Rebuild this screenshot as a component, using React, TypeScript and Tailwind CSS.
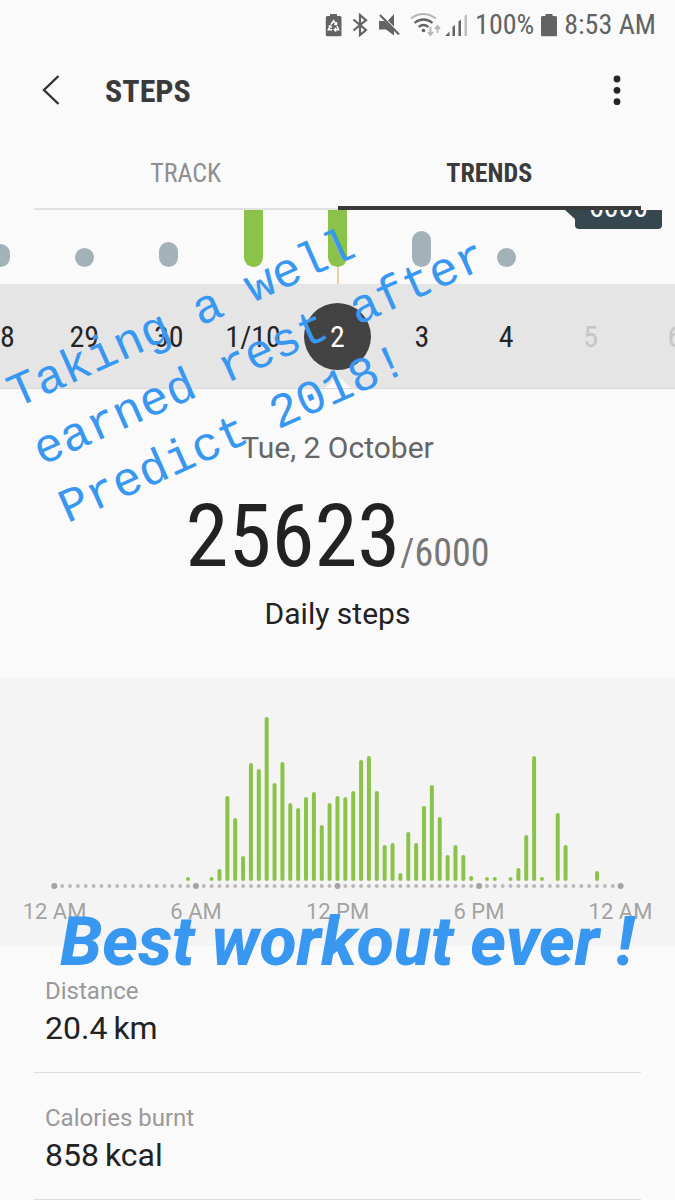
import React from "react";

const condensed = "font-['Roboto_Condensed','Roboto','Liberation_Sans_Narrow',sans-serif]";

type Day = { label: string; bar: number; goal?: boolean; selected?: boolean; future?: boolean };

const days: Day[] = [
  { label: "28", bar: 23 },
  { label: "29", bar: 19 },
  { label: "30", bar: 25 },
  { label: "1/10", bar: 90, goal: true },
  { label: "2", bar: 90, goal: true, selected: true },
  { label: "3", bar: 36 },
  { label: "4", bar: 19 },
  { label: "5", bar: 0, future: true },
  { label: "6", bar: 0, future: true },
];

// Twenty-minute slots of the day: [slot, bar height]
const activity: [number, number][] = [
  [17, 4], [20, 4], [21, 12], [22, 85], [23, 63], [24, 25], [25, 118], [26, 112], [27, 164],
  [28, 98], [29, 119], [30, 78], [31, 73], [32, 84], [33, 89], [34, 56], [35, 78], [36, 85],
  [37, 84], [38, 90], [39, 121], [40, 125], [41, 90], [42, 36], [43, 38], [44, 8], [45, 49],
  [46, 38], [47, 75], [48, 96], [49, 64], [50, 26], [51, 36], [52, 26], [53, 5], [55, 4],
  [56, 4], [58, 4], [59, 13], [60, 46], [61, 125], [62, 4], [64, 68], [65, 36], [69, 10],
];

const slotX = (slot: number) => 54.3 + slot * 7.866;

const stats = [
  { label: "Distance", amount: "20.4", unit: "km" },
  { label: "Calories burnt", amount: "858", unit: "kcal" },
];

function StatusBar() {
  return (
    <div className={`flex h-12 items-center justify-end pt-[2px] pr-[19px] text-[28px] leading-none text-[#636363] ${condensed}`}>
      <svg className="mr-[10px] h-[24px] w-[17px]" viewBox="0 0 17 24" aria-hidden="true">
        <path fill="#636363" d="M5 1h7v2h3q1.500 0 1.500 1.500V22q0 1.200-1.200 1.200H2Q.8 23.200.8 22V4.500Q.8 3 2.300 3H5z" />
        <g stroke="#fafafa" strokeWidth="1.600" fill="none">
          <path d="M6 11.500 8.600 7.600l2.300 3.600M12 13l1.600 3.800H9.800M7.300 16.800H3.400l1.900-3.900" />
          <path d="M9.200 11.500h2.300V9M11.200 15l-1.800 1.800 1.800 1.700M3.600 13.600l1.900-.8 1 2" />
        </g>
      </svg>
      <svg className="mr-[10px] h-[24px] w-[16px]" viewBox="0 0 16 24" aria-hidden="true">
        <path d="M1.500 6.500 14 17l-6 5V2l6 5.200L1.500 17.500" fill="none" stroke="#636363" strokeWidth="2.200" />
      </svg>
      <svg className="mr-[10px] h-[24px] w-[22px]" viewBox="0 0 22 24" aria-hidden="true">
        <path fill="#636363" d="M1 8h5.500L16 17.500V22.500l-8-6H1zM16 1v12.500l-6-6z" />
        <path d="M2 2 21 21.500" stroke="#636363" strokeWidth="2.200" />
      </svg>
      <svg className="mr-[4px] h-[24px] w-[31px]" viewBox="0 0 31 24" fill="none" aria-hidden="true">
        <path d="M1 5.500q12-9 25 0" stroke="#b5b5b5" strokeWidth="2" />
        <path d="M4.500 10q9-7 18 0M8.500 14q5-4 10 0" stroke="#636363" strokeWidth="2.200" />
        <circle cx="13.500" cy="17.500" r="1.800" fill="#636363" />
        <path d="M20.500 14v8m-2.500-3 2.500 3 2.500-3M27.500 20v-7m-2.500 3 2.500-3 2.500 3" stroke="#b5b5b5" strokeWidth="1.800" />
      </svg>
      <svg className="mr-[8px] h-[24px] w-[22px]" viewBox="0 0 22 24" aria-hidden="true">
        <path fill="#636363" d="M0 23 4.500 18.500V23zM7.500 14l2.500-2v11H7.500zM13.500 8.500l2.500-2V23h-2.500z" />
        <path fill="#bdbdbd" d="M19.500 3 22 1v22h-2.500z" />
      </svg>
      <span>100%</span>
      <svg className="mx-[7px] h-[24px] w-[16px]" viewBox="0 0 16 24" aria-hidden="true">
        <path fill="#636363" d="M4.500 1h7v2h3Q16 3 16 4.500V22q0 1.200-1.200 1.200H1.200Q0 23.200 0 22V4.500Q0 3 1.500 3h3z" />
      </svg>
      <span>8:53 AM</span>
    </div>
  );
}

export default function App() {
  return (
    <main className="relative min-h-screen w-full overflow-hidden bg-[#fafafa] font-['Roboto',sans-serif] text-[#222]">
      <StatusBar />

      <header className={`flex h-[86px] items-center pr-[46px] pl-[40px] ${condensed}`}>
        <button type="button" aria-label="Back" className="w-[65px]">
          <svg className="h-[32px] w-[22px]" viewBox="0 0 22 32" fill="none" aria-hidden="true">
            <path d="M18.500 1 4 15l14.500 14" stroke="#333" strokeWidth="2.400" />
          </svg>
        </button>
        <h1 className="flex-1 text-[32px] font-bold text-[#3a3a3a]">STEPS</h1>
        <button type="button" aria-label="More options" className="w-6">
          <svg className="h-[32px] w-6" viewBox="0 0 24 32" fill="#252525" aria-hidden="true">
            <circle cx="12" cy="4" r="3.400" />
            <circle cx="12" cy="15.300" r="3.400" />
            <circle cx="12" cy="26.700" r="3.400" />
          </svg>
        </button>
      </header>

      <nav className={`mx-[34px] flex h-[76px] text-[26px] leading-none ${condensed}`}>
        <button type="button" className="flex-1 border-b-2 border-[#e2e2e2] pt-1 text-[#8f8f8f]">TRACK</button>
        <button type="button" className="flex-1 border-b-4 border-[#3a3a3a] pt-[6px] font-bold text-[#3a3a3a]">TRENDS</button>
      </nav>

      <section aria-label="Days" className={condensed}>
        <div className="relative h-[74px] overflow-hidden">
          <div className="-ml-[6.25%] flex h-full w-[112.5%]">
            {days.map((d) => (
              <div key={d.label} className="relative flex flex-1 items-end justify-center pb-[17px]">
                <div
                  className={`w-[19px] shrink-0 rounded-full ${d.goal ? "bg-[#8bc34a]" : "bg-[#a3b1b8]"}`}
                  style={{ height: d.bar }}
                />
                {d.selected && <div className="absolute bottom-0 left-1/2 h-[17px] w-px -translate-x-1/2 bg-[#e0a43c]" />}
              </div>
            ))}
          </div>
          <div className="absolute -top-[25px] right-[13px] flex h-[44px] w-[87px] items-center justify-center rounded bg-[#37474f] text-[30px] leading-none text-white">
            6000
          </div>
          <svg className="absolute top-0 right-[99px] h-[10px] w-[11px]" viewBox="0 0 11 10" aria-hidden="true">
            <path d="M0 0h11v10z" fill="#37474f" />
          </svg>
        </div>

        <div className="relative h-[105px] overflow-hidden border-b border-[#d9d9d9] bg-[#e5e5e5]">
          <svg className="absolute bottom-0 left-1/2 h-[12px] w-[26px] -translate-x-1/2" viewBox="0 0 26 12" aria-hidden="true">
            <path d="M0 12 13 0l13 12z" fill="#fafafa" />
          </svg>
          <div className="-ml-[6.25%] flex h-full w-[112.5%] items-center">
            {days.map((d) => (
              <div key={d.label} className="flex flex-1 justify-center">
                <button
                  type="button"
                  className={`flex h-[67px] min-w-[67px] items-center justify-center rounded-full pt-[2px] text-[30px] leading-none ${
                    d.selected ? "bg-[#424242] text-white" : d.future ? "text-[#c6c6c6]" : "text-[#252525]"
                  }`}
                >
                  {d.label}
                </button>
              </div>
            ))}
          </div>
        </div>
      </section>

      <section className="flex h-[289px] flex-col items-center pt-[39px]">
        <p className="text-[30px] leading-[40px] text-[#666]">Tue, 2 October</p>
        <p className={`mt-[26px] flex items-baseline leading-[84px] ${condensed}`}>
          <span className="text-[87px]">25623</span>
          <span className="text-[38px] text-[#777]">/6000</span>
        </p>
        <p className="text-[30px] leading-[38px]">Daily steps</p>
      </section>

      <section aria-label="Steps by hour" className="overflow-hidden bg-[#f4f4f4] pb-[18px]">
        <svg className="block w-full" viewBox="0 0 675 218" aria-hidden="true">
          {activity.map(([slot, h]) => (
            <rect key={slot} x={slotX(slot) - 2} y={203 - h} width="4" height={h} rx="2" fill="#8bc34a" />
          ))}
          {Array.from({ length: 73 }, (_, i) => (
            <circle
              key={i}
              cx={slotX(i)}
              cy="208"
              r={i % 18 === 0 ? 3 : 2}
              fill={i % 18 === 0 ? "#a3a3a3" : "#b9b9b9"}
            />
          ))}
        </svg>
        <div className="-ml-[2.400%] flex w-[104.800%] text-[22px] leading-[32px] text-[#a3a3a3]">
          {["12 AM", "6 AM", "12 PM", "6 PM", "12 AM"].map((t, i) => (
            <span key={i} className="flex-1 text-center">{t}</span>
          ))}
        </div>
      </section>

      <dl className="mx-[34px]">
        {stats.map((s) => (
          <div key={s.label} className="h-[127px] border-b border-[#dedede] pt-[29px] pl-[11px]">
            <dt className="text-[24px] leading-[32px] text-[#999]">{s.label}</dt>
            <dd className="flex gap-[6px] text-[32px] leading-[42px]">
              <span>{s.amount}</span>
              <span>{s.unit}</span>
            </dd>
          </div>
        ))}
      </dl>

      <p className="absolute top-[368px] -left-[2px] origin-top-left -rotate-[24deg] font-['Liberation_Mono',monospace] text-[48px] leading-[63px] whitespace-pre text-[#3897f0]">
        {"Taking a well\nearned rest after\nPredict 2018!"}
      </p>
      <p className="absolute top-[900px] left-[60px] text-[68px] leading-[84px] font-extrabold whitespace-nowrap text-[#3897f0] italic">
        Best workout ever !
      </p>
    </main>
  );
}
